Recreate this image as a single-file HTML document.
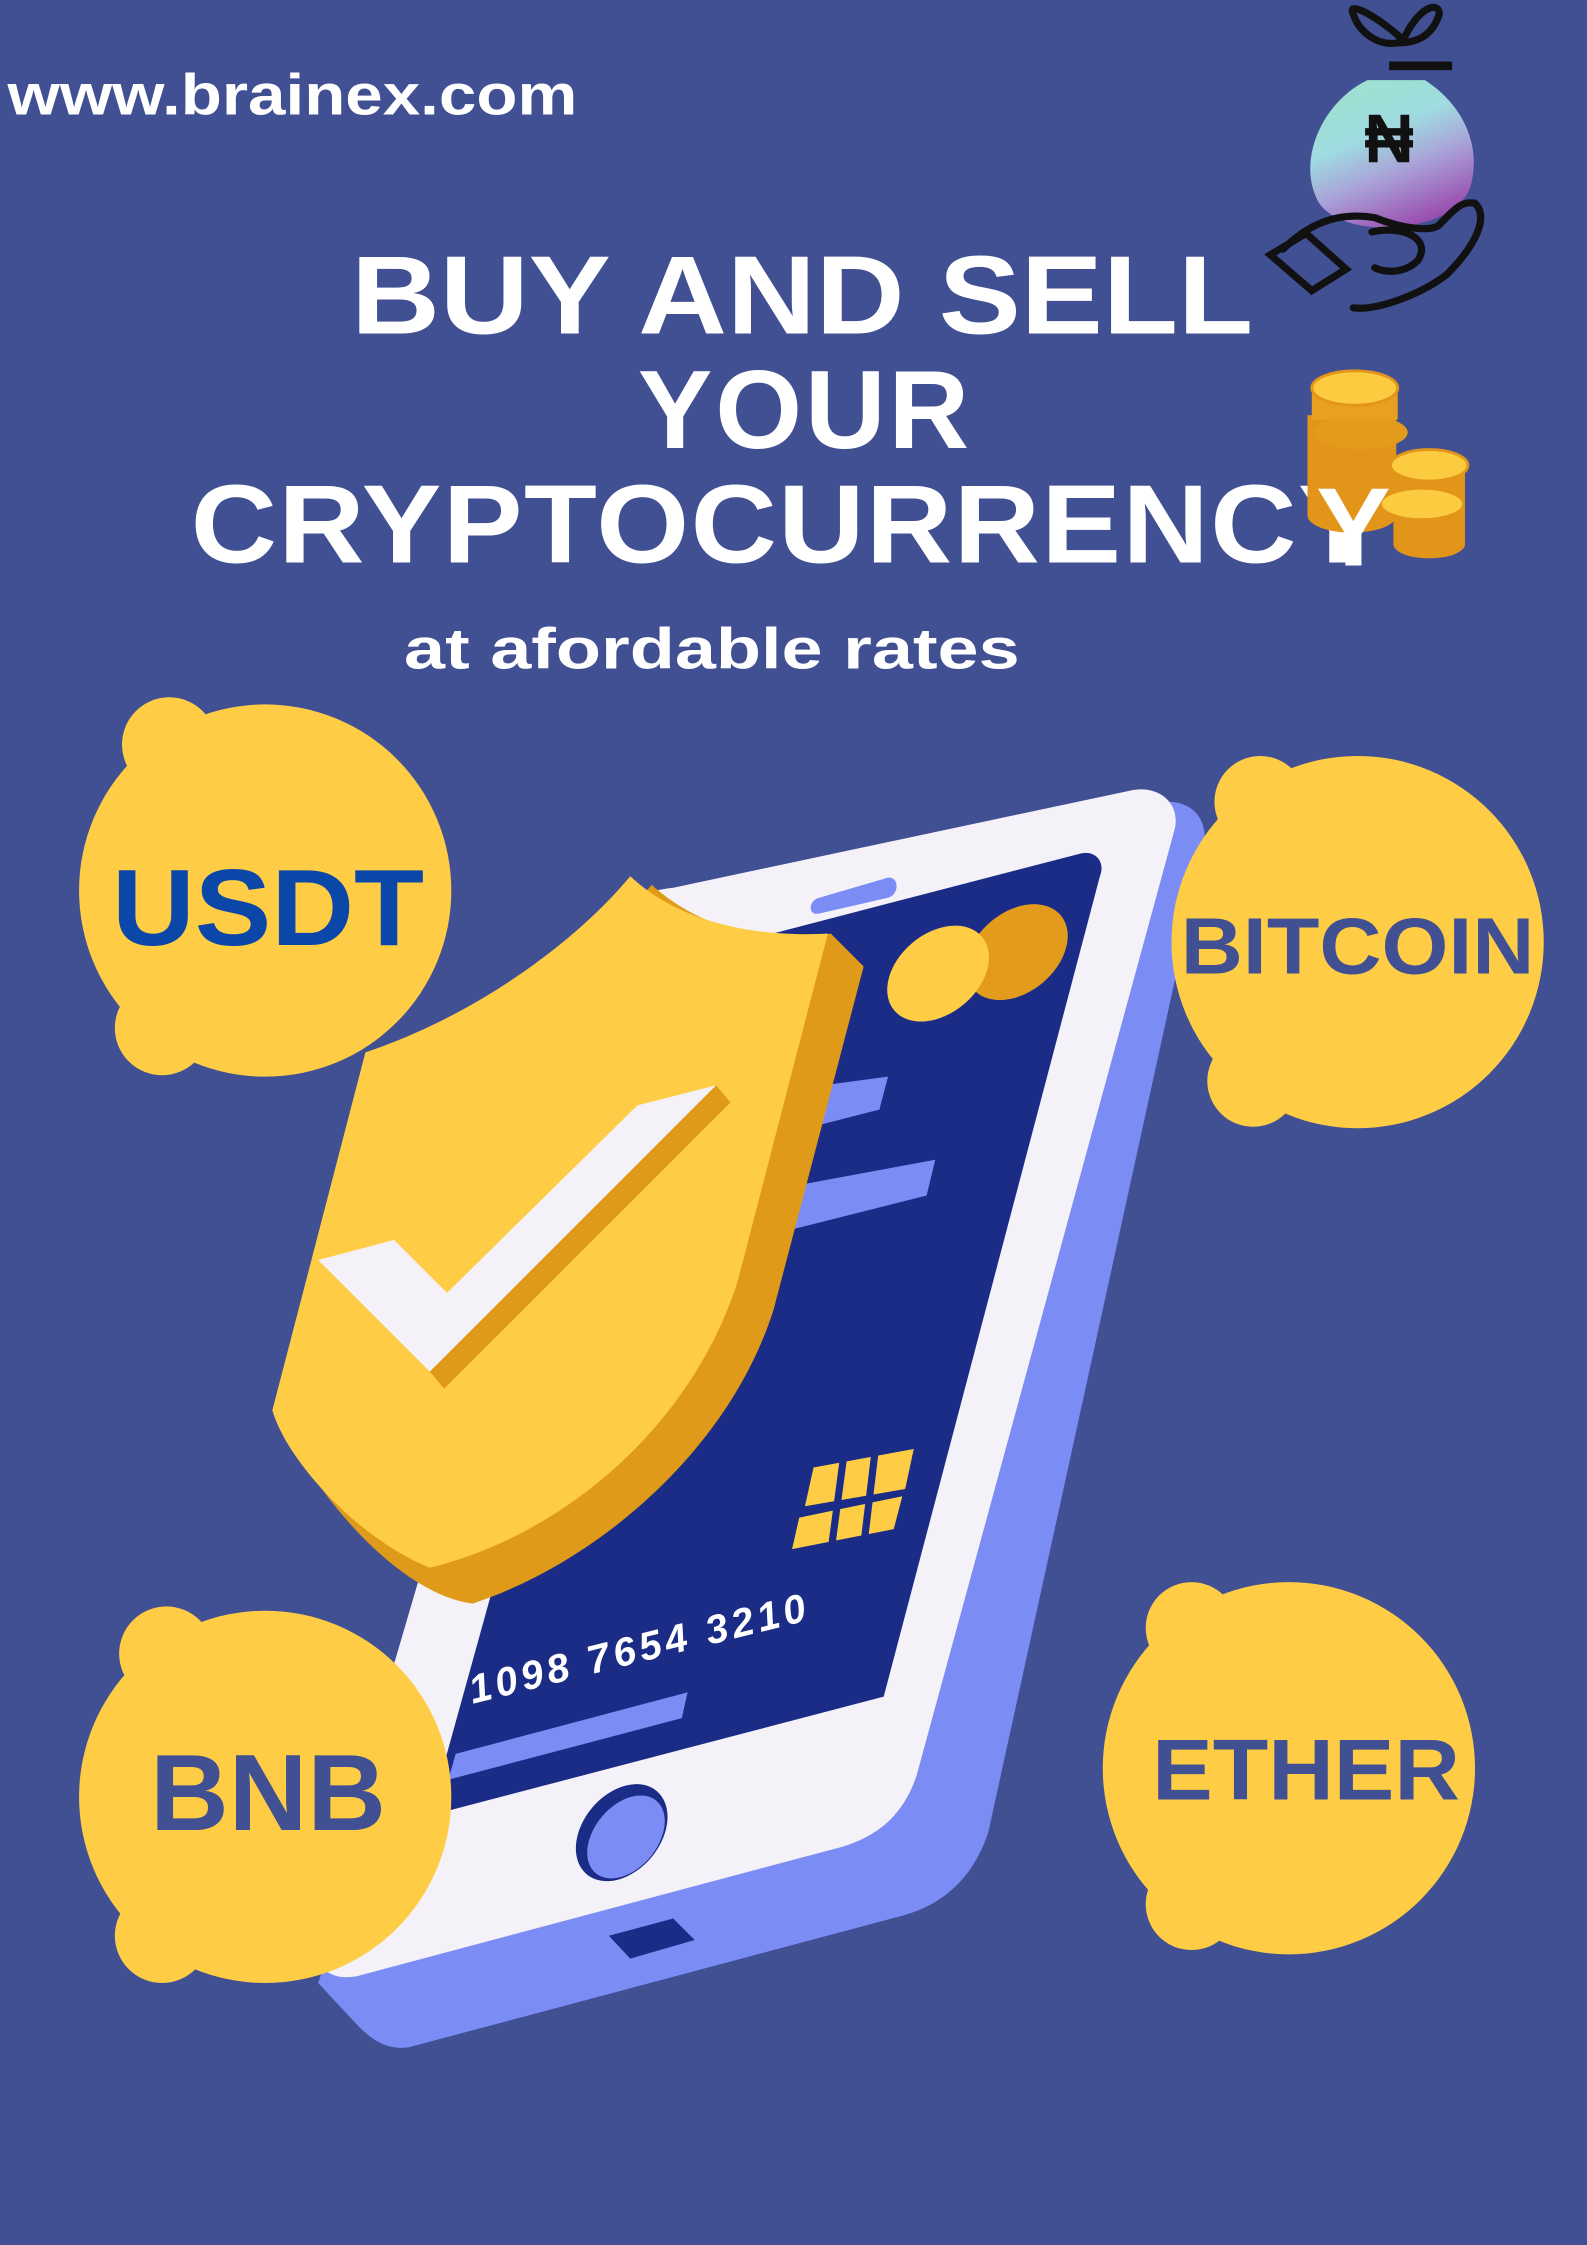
<!DOCTYPE html>
<html><head><meta charset="utf-8"><style>
html,body{margin:0;padding:0;background:#414f93;}
svg{display:block}
text{font-family:"Liberation Sans",sans-serif;font-weight:bold}
</style></head><body>
<svg width="1587" height="2245" viewBox="0 0 1108 1568" xmlns="http://www.w3.org/2000/svg">
<defs>
<linearGradient id="bag" x1="0.3" y1="0.1" x2="0.7" y2="0.95">
<stop offset="0" stop-color="#9ee0d3"/><stop offset="0.3" stop-color="#9fdbe0"/><stop offset="0.6" stop-color="#a9a3d8"/><stop offset="1" stop-color="#9a4fb0"/></linearGradient>
</defs>
<rect width="1108" height="1568" fill="#414f93"/>
<text x="5" y="80" font-size="40" fill="#fff" textLength="398" lengthAdjust="spacingAndGlyphs">www.brainex.com</text>
<g fill="#fff" text-anchor="middle">
<text x="560" y="233" font-size="78" textLength="630" lengthAdjust="spacingAndGlyphs">BUY AND SELL</text>
<text x="562" y="313" font-size="78" letter-spacing="2">YOUR</text>
<text x="548" y="393" font-size="78" letter-spacing="1" textLength="830" lengthAdjust="spacingAndGlyphs">CRYPTOCURRENCY</text>
<text x="497" y="467" font-size="40" textLength="430" lengthAdjust="spacingAndGlyphs">at afordable rates</text>
</g>
<!-- money bag -->
<g stroke="#111" stroke-width="5" fill="none">
<path d="M980 28 C960 10 940 0 945 10 C950 25 965 32 975 30 C990 30 1000 25 1005 10 C1005 0 990 5 980 28Z"/>
<rect x="970" y="43" width="44" height="6" fill="#111" stroke="none"/>
</g>
<path d="M970 56 L1010 56 C1035 72 1050 100 1042 130 C1030 165 950 168 935 140 C920 110 940 70 970 56Z" fill="url(#bag)" transform="translate(-15,0)"/>
<text x="970" y="113" font-size="48" fill="#111" text-anchor="middle">₦</text>
<g stroke="#111" stroke-width="5" fill="none" stroke-linecap="round" transform="translate(0,-18)">
<path d="M896 192 C910 178 930 165 960 170 C980 178 1000 180 1005 175 C1015 165 1020 158 1030 160 C1040 170 1030 190 1010 210 C990 225 960 235 945 233"/>
<path d="M958 180 C980 175 1000 185 990 200 C980 210 965 208 960 205"/>
<path d="M887 193 L912 178 L940 203 L916 218 Z" transform="translate(0,3)"/>
</g>
<!-- coins -->
<g>
<rect x="913" y="290" width="62" height="70" fill="#e3951a"/>
<ellipse cx="944" cy="360" rx="31" ry="12" fill="#e3951a"/>
<ellipse cx="950" cy="302" rx="33" ry="12" fill="#e39b1c"/>
<rect x="916" y="275" width="60" height="18" fill="#e8a020"/>
<ellipse cx="946" cy="271" rx="30" ry="12" fill="#fccb40" stroke="#e3951a" stroke-width="2"/>
<rect x="973" y="325" width="50" height="55" fill="#e3951a"/>
<ellipse cx="998" cy="380" rx="25" ry="10" fill="#e3951a"/>
<ellipse cx="998" cy="325" rx="27" ry="11" fill="#fccb40" stroke="#e3951a" stroke-width="2"/>
<ellipse cx="993" cy="352" rx="29" ry="11" fill="#fccb40" stroke="#e3951a" stroke-width="2"/>
</g>
<text x="945" y="395" font-size="78" fill="#fff" text-anchor="middle">Y</text>
<!-- phone -->
<path d="M480 640 L815 560 C835 560 845 575 840 595 L690 1280 C680 1310 660 1330 630 1338 L285 1430 C270 1432 260 1425 250 1415 L222 1385 Z" fill="#7b8cf5"/>
<path d="M470 620 L790 552 C810 548 825 562 820 580 L640 1240 C630 1270 610 1285 580 1292 L250 1380 C228 1385 215 1370 220 1350 L425 650 C432 630 450 622 470 620Z" fill="#f4f2f8"/>
<path d="M478 668 L755 596 C765 594 772 602 768 612 L617 1185 L300 1268 L460 690 C463 678 470 670 478 668Z" fill="#1a2c86"/>
<path d="M572 627 L620 613 C628 612 628 625 620 627 L572 638 C564 640 564 629 572 627Z" fill="#7b8cf5"/>
<ellipse cx="434" cy="1280" rx="38" ry="27" transform="rotate(-50 434 1280)" fill="#1a2c86"/>
<ellipse cx="437" cy="1283" rx="33" ry="22" transform="rotate(-50 437 1283)" fill="#7b8cf5"/>
<path d="M425 1352 L470 1340 L485 1355 L440 1368 Z" fill="#1a2c86"/>
<path d="M318 1225 L480 1182 L476 1200 L313 1243 Z" fill="#7b8cf5"/>
<path d="M560 760 L620 752 L614 775 L555 790 Z" fill="#7b8cf5"/>
<path d="M545 830 L653 810 L647 835 L540 862 Z" fill="#7b8cf5"/>
<ellipse cx="710" cy="665" rx="40" ry="28" transform="rotate(-40 710 665)" fill="#e39b1c"/>
<ellipse cx="655" cy="680" rx="40" ry="28" transform="rotate(-40 655 680)" fill="#fecd45"/>
<g fill="#fecd45">
<path d="M568 1025 L638 1012 L632 1040 L562 1052 Z"/>
<path d="M558 1060 L630 1045 L624 1068 L553 1082 Z"/>
</g>
<g stroke="#1a2c86" stroke-width="5"><line x1="590" y1="1010" x2="580" y2="1085"/><line x1="612" y1="1005" x2="603" y2="1080"/></g>
<text x="330" y="1190" font-size="28" fill="#fff" font-style="italic" font-weight="normal" transform="rotate(-14 330 1190)" letter-spacing="3">1098 7654 3210</text>
<!-- circles -->
<g fill="#fecd45">
<circle cx="185" cy="622" r="130"/><circle cx="118" cy="520" r="33"/><circle cx="113" cy="718" r="33"/>
<circle cx="948" cy="658" r="130"/><circle cx="880" cy="560" r="32"/><circle cx="875" cy="755" r="32"/>
<circle cx="185" cy="1255" r="130"/><circle cx="116" cy="1155" r="33"/><circle cx="113" cy="1352" r="33"/>
<circle cx="900" cy="1235" r="130"/><circle cx="832" cy="1137" r="32"/><circle cx="832" cy="1330" r="32"/>
</g>
<!-- shield -->
<path d="M455 618 C490 650 540 660 580 652 L603 675 L540 915 C510 1010 420 1090 330 1120 C290 1115 240 1070 205 1010 L265 740 C330 715 400 680 455 618Z" fill="#e09a1a"/>
<path d="M440 612 C475 645 530 655 578 652 L515 895 C485 990 400 1070 300 1095 C250 1075 200 1020 190 985 L255 735 C330 710 400 660 440 612Z" fill="#fecd45"/>
<path d="M222 880 L275 866 L312 903 L445 772 L500 758 L300 958 Z" fill="#f4f2f8"/>
<path d="M500 758 L510 770 L310 970 L300 958 Z" fill="#e09a1a"/>
<!-- labels -->
<text x="187" y="660" font-size="76" fill="#0b47a8" text-anchor="middle" textLength="218" lengthAdjust="spacingAndGlyphs">USDT</text>
<text x="948" y="680" font-size="56" fill="#414f93" text-anchor="middle" textLength="247" lengthAdjust="spacingAndGlyphs">BITCOIN</text>
<text x="187" y="1278" font-size="76" fill="#414f93" text-anchor="middle">BNB</text>
<text x="912" y="1257" font-size="60" fill="#414f93" text-anchor="middle" textLength="215" lengthAdjust="spacingAndGlyphs">ETHER</text>
</svg>
</body></html>
